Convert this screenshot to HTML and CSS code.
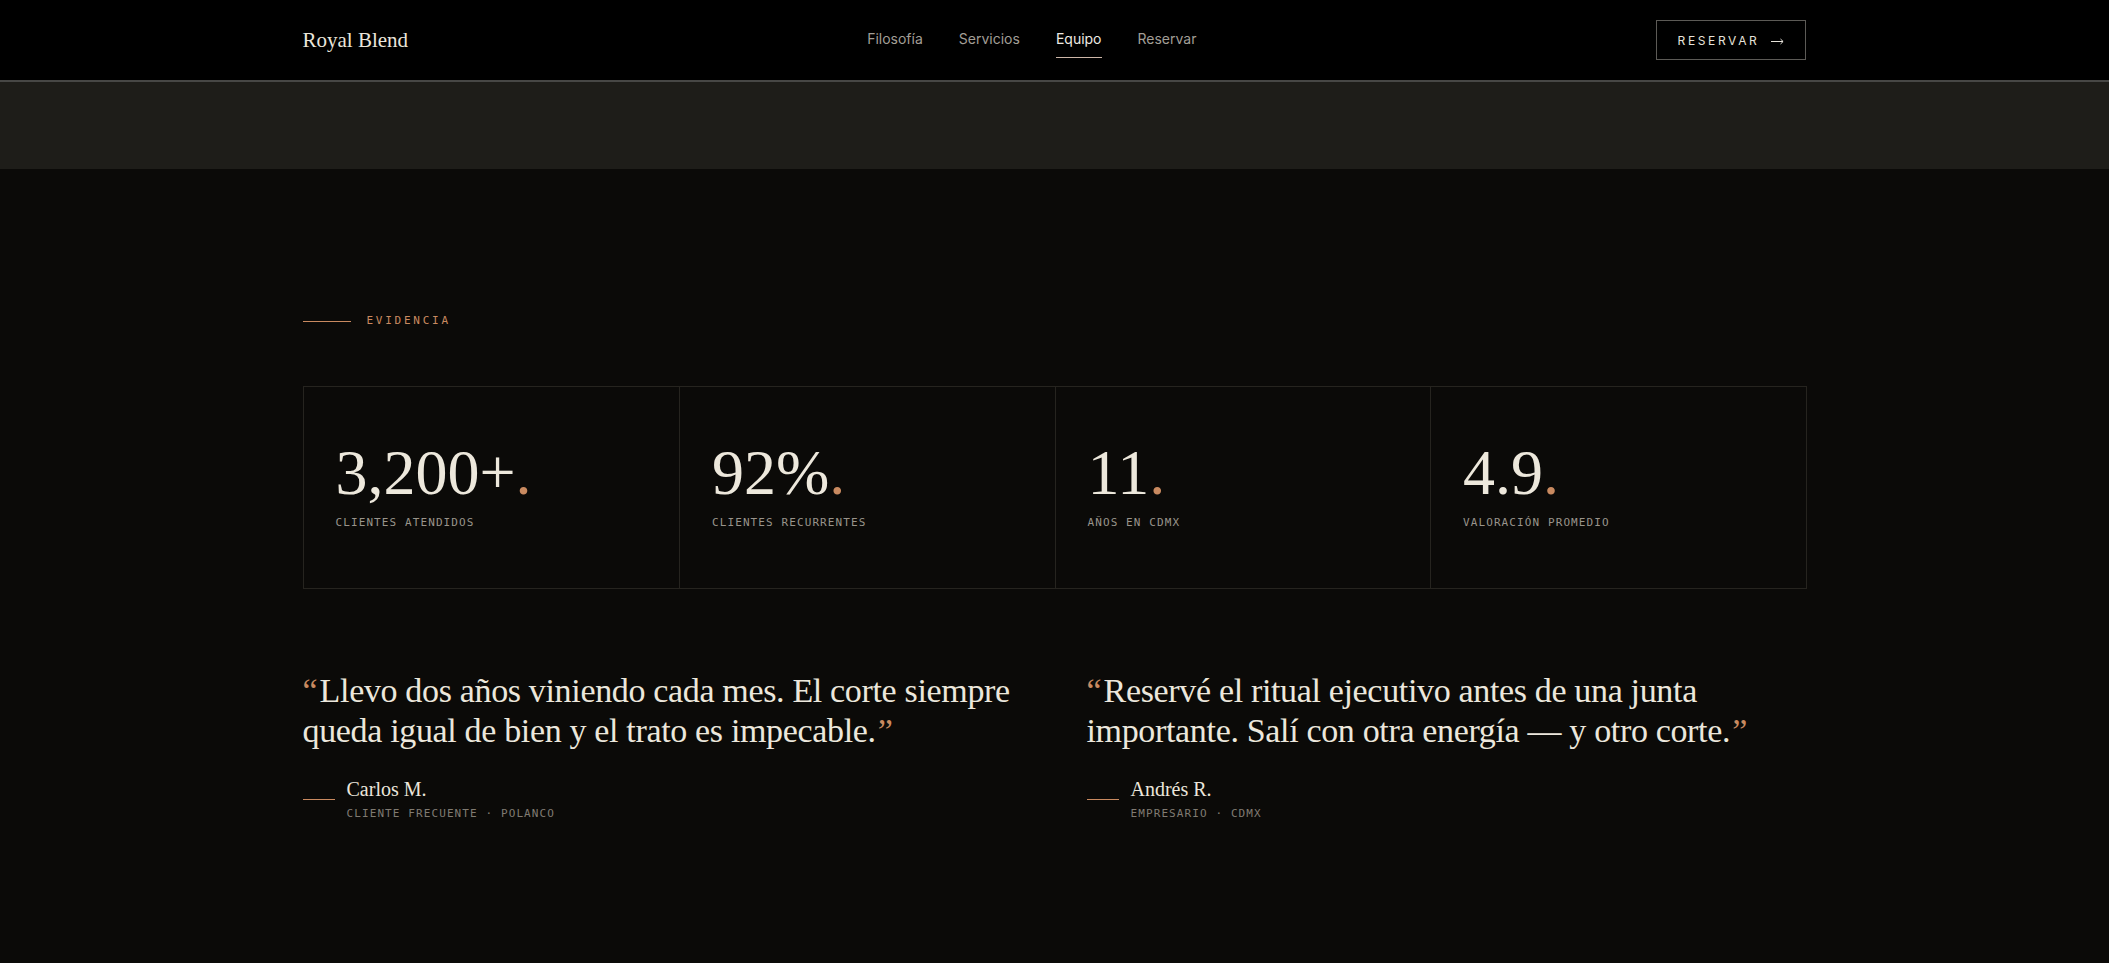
FILE: index.html
```html
<!DOCTYPE html>
<html lang="es">
<head>
    <meta charset="UTF-8">
    <meta name="viewport" content="width=device-width, initial-scale=1.0">
    <title>Royal Blend — Evidencia</title>

    <link rel="stylesheet" href="styles.css">

</head>
<body>

    <header class="topo">
        <div class="contenedor topo-linha">
            <a href="#" class="marca">Royal Blend</a>
            <nav>
                <ul class="menu">
                    <li><a href="#filosofia">Filosofía</a></li>
                    <li><a href="#servicios">Servicios</a></li>
                    <li><a href="#equipo" class="ativo">Equipo</a></li>
                    <li><a href="#reservar">Reservar</a></li>
                </ul>
            </nav>
            <a href="#reservar" class="btn-reservar">RESERVAR
                <svg class="seta" width="13" height="7" viewBox="0 0 13 7" fill="none" stroke="currentColor" stroke-width="1">
                    <path d="M0 3.5h12M9.5 1l2.6 2.5L9.5 6"/>
                </svg>
            </a>
        </div>
    </header>

    <!-- final da seção anterior (equipo) -->
    <div class="faixa"></div>

    <section class="evidencia">
        <div class="contenedor">
            <p class="sobretitulo"><span class="traco"></span>EVIDENCIA</p>

            <div class="numeros">
                <div class="numero">
                    <p class="valor">3,200+<span class="ponto">.</span></p>
                    <p class="legenda">Clientes atendidos</p>
                </div>
                <div class="numero">
                    <p class="valor">92%<span class="ponto">.</span></p>
                    <p class="legenda">Clientes recurrentes</p>
                </div>
                <div class="numero">
                    <p class="valor">11<span class="ponto">.</span></p>
                    <p class="legenda">Años en CDMX</p>
                </div>
                <div class="numero">
                    <p class="valor">4.9<span class="ponto">.</span></p>
                    <p class="legenda">Valoración promedio</p>
                </div>
            </div>

            <div class="depoimentos">
                <figure class="depoimento">
                    <blockquote><span class="aspas abre">“</span>Llevo dos años viniendo cada mes. El corte siempre queda igual de bien y el trato es impecable.<span class="aspas fecha">”</span></blockquote>
                    <figcaption class="autor">
                        <span class="autor-traco"></span>
                        <div>
                            <p class="autor-nome">Carlos M.</p>
                            <p class="autor-info">Cliente frecuente · Polanco</p>
                        </div>
                    </figcaption>
                </figure>
                <figure class="depoimento">
                    <blockquote><span class="aspas abre">“</span>Reservé el ritual ejecutivo antes de una junta importante. Salí con otra energía — y otro corte.<span class="aspas fecha">”</span></blockquote>
                    <figcaption class="autor">
                        <span class="autor-traco"></span>
                        <div>
                            <p class="autor-nome">Andrés R.</p>
                            <p class="autor-info">Empresario · CDMX</p>
                        </div>
                    </figcaption>
                </figure>
            </div>
        </div>
    </section>

</body>
</html>
```

FILE: styles.css
```css
@charset "utf-8";

*{
    padding: 0px;
    margin: 0px;
    box-sizing: border-box;
}
html{
    color-scheme: dark;
    overflow-y: scroll;
    scrollbar-color: #6b6b6b #2d2d2d;
    background-color: #0b0a08;
}
body{
    background-color: #0b0a08;
    color: #ece7dc;
    font: normal 14px 'Inter', 'Liberation Sans', sans-serif;
}
a{
    color: inherit;
    text-decoration: none;
}

.contenedor{
    width: 1504px;
    margin: 0 auto;
}

/* cabeçalho */
.topo{
    background-color: #000;
    border-bottom: 2px solid #474745;
}
.topo-linha{
    height: 80px;
    display: flex;
    align-items: center;
    justify-content: space-between;
}
.marca{
    font-family: 'Liberation Serif', serif;
    font-size: 21px;
    color: #ebe6dc;
}
.menu{
    list-style: none;
    display: flex;
    gap: 36px;
}
.menu a{
    display: block;
    padding: 8px 0 10px;
    border-bottom: 1px solid transparent;
    color: #a29e96;
    font-size: 14px;
}
.menu a.ativo{
    color: #eeeae2;
    border-bottom-color: #cdb6a8;
}
.btn-reservar{
    height: 40px;
    display: flex;
    align-items: center;
    gap: 12px;
    padding: 0 21px;
    border: 1px solid #5c5a56;
    color: #e6e2da;
    font-size: 12px;
    letter-spacing: 0.22em;
}
.seta{
    margin-top: 2px;
}

.faixa{
    height: 87px;
    background-color: #1e1d19;
}

/* evidencia */
.evidencia{
    padding: 144px 0 100px;
}
.sobretitulo{
    display: flex;
    align-items: center;
    gap: 16px;
    font: normal 11px/16px 'DejaVu Sans Mono', monospace;
    letter-spacing: 0.25em;
    color: #c98a60;
    margin-bottom: 57px;
}
.traco{
    width: 48px;
    height: 1px;
    background-color: #c98a60;
}
.numeros{
    display: grid;
    grid-template-columns: repeat(4, 1fr);
    border: 1px solid #26241f;
}
.numero{
    padding: 54px 32px 56px;
    border-left: 1px solid #26241f;
}
.numero:first-child{
    border-left: none;
}
.valor{
    font: normal 64px/1 'Liberation Serif', serif;
    color: #ede8dc;
}
.ponto{
    color: #c98a60;
}
.legenda{
    margin-top: 10px;
    font: normal 11px/16.5px 'DejaVu Sans Mono', monospace;
    letter-spacing: 0.1em;
    text-transform: uppercase;
    color: #99948b;
}

/* depoimentos */
.depoimentos{
    display: grid;
    grid-template-columns: 1fr 1fr;
    gap: 64px;
    margin-top: 82px;
}
.depoimento blockquote{
    font: normal 34px/1.2 'Liberation Serif', serif;
    letter-spacing: -0.01em;
    color: #ece7dc;
}
.aspas{
    color: #c98a60;
    letter-spacing: 0;
}
.aspas.abre{
    margin-right: 2px;
}
.aspas.fecha{
    margin-left: 2px;
}
.autor{
    display: flex;
    align-items: center;
    gap: 12px;
    margin-top: 24px;
}
.autor-traco{
    width: 32px;
    height: 1px;
    background-color: #c98a60;
}
.autor-nome{
    font: normal 20px/26px 'Liberation Serif', serif;
    color: #ebe6dc;
}
.autor-info{
    margin-top: 4px;
    font: normal 11px/16px 'DejaVu Sans Mono', monospace;
    letter-spacing: 0.1em;
    text-transform: uppercase;
    color: #807b72;
}
```
